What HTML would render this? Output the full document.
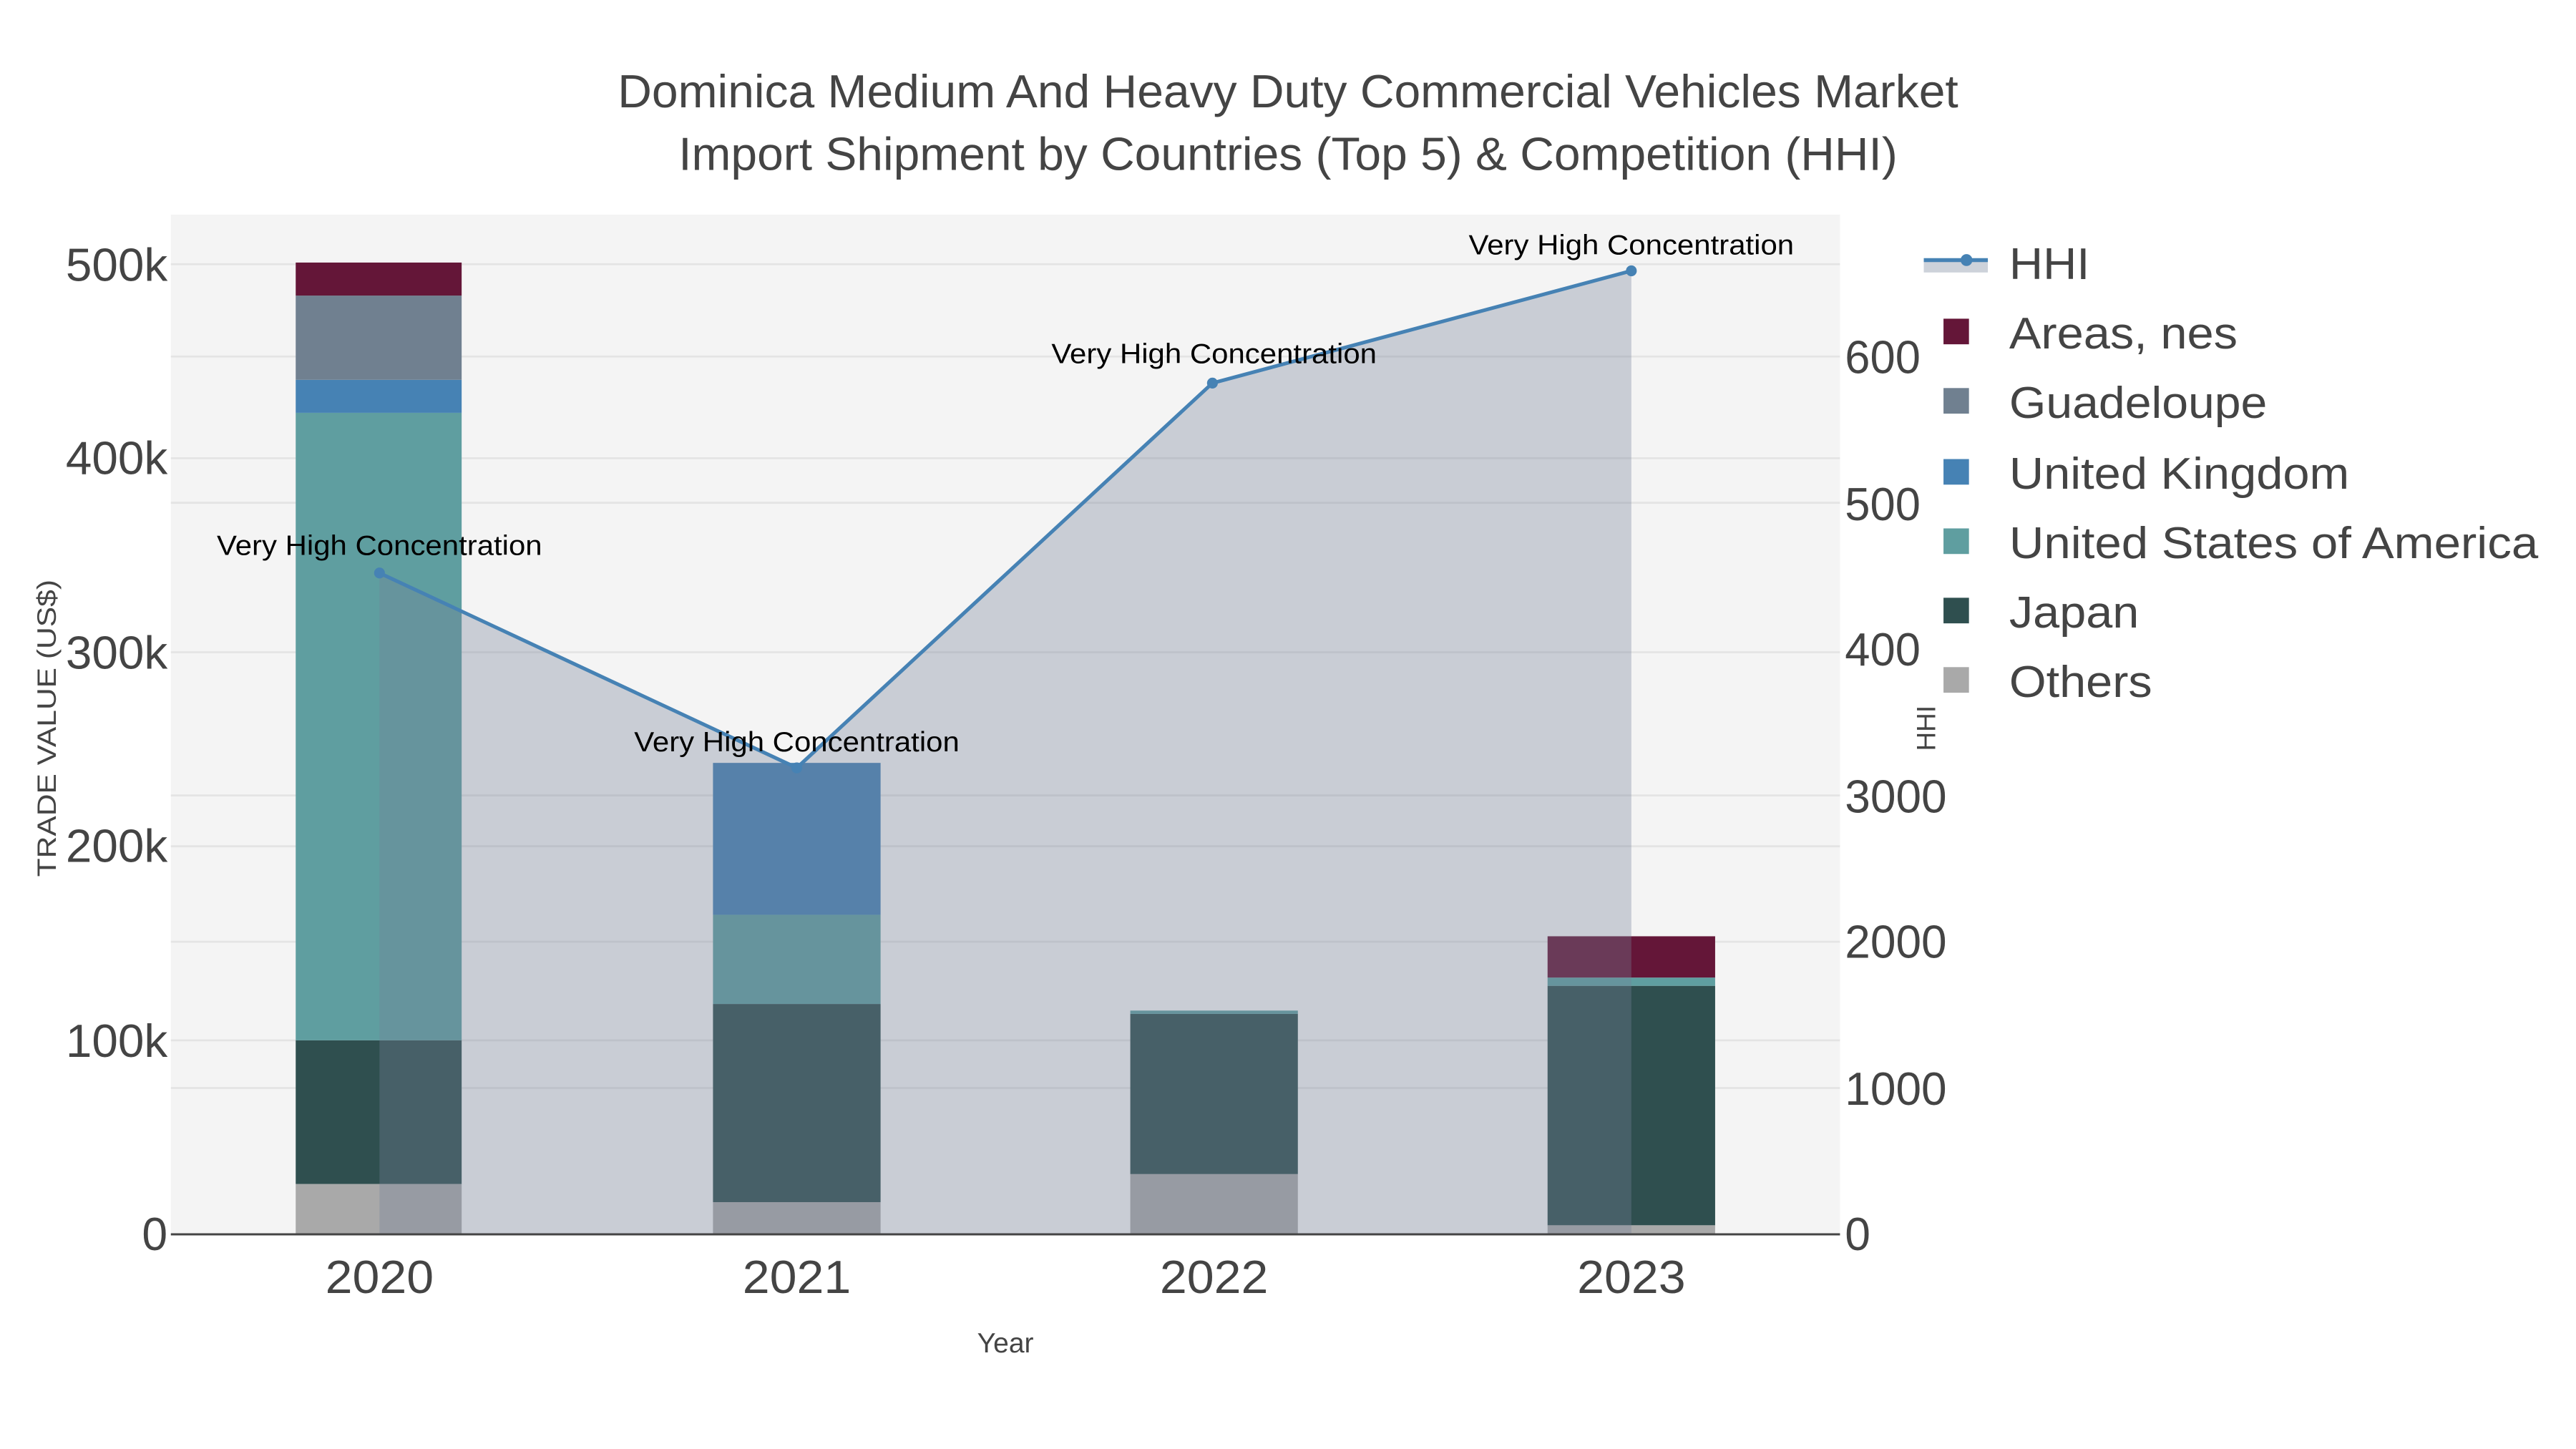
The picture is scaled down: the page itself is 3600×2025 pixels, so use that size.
<!DOCTYPE html>
<html><head><meta charset="utf-8"><style>html,body{margin:0;padding:0;background:#fff}svg{display:block}</style></head>
<body>
<svg width="3600" height="2025" viewBox="0 0 1568 877.5" preserveAspectRatio="none" xmlns="http://www.w3.org/2000/svg" font-family="Liberation Sans, sans-serif">
<rect width="1568" height="877.5" fill="#fff"/>
<rect x="104" y="130" width="1016" height="617.5" fill="#f4f4f4"/>
<g stroke="#e4e4e4" stroke-width="1.2">
<line x1="104" x2="1120" y1="630" y2="630"/><line x1="104" x2="1120" y1="512.5" y2="512.5"/>
<line x1="104" x2="1120" y1="395" y2="395"/><line x1="104" x2="1120" y1="277.5" y2="277.5"/>
<line x1="104" x2="1120" y1="160" y2="160"/>
<line x1="104" x2="1120" y1="658.9" y2="658.9"/><line x1="104" x2="1120" y1="570.3" y2="570.3"/>
<line x1="104" x2="1120" y1="481.7" y2="481.7"/><line x1="104" x2="1120" y1="304.5" y2="304.5"/>
<line x1="104" x2="1120" y1="215.9" y2="215.9"/>
</g>
<rect x="180" y="717" width="101" height="30.5" fill="#a9a9a9"/>
<rect x="180" y="630" width="101" height="87" fill="#2f4f4f"/>
<rect x="180" y="250" width="101" height="380" fill="#5f9ea0"/>
<rect x="180" y="230" width="101" height="20" fill="#4682b4"/>
<rect x="180" y="179" width="101" height="51" fill="#708090"/>
<rect x="180" y="159" width="101" height="20" fill="#641638"/>
<rect x="434" y="728" width="102" height="19.5" fill="#a9a9a9"/>
<rect x="434" y="608" width="102" height="120" fill="#2f4f4f"/>
<rect x="434" y="554" width="102" height="54" fill="#5f9ea0"/>
<rect x="434" y="462" width="102" height="92" fill="#4682b4"/>
<rect x="688" y="711" width="102" height="36.5" fill="#a9a9a9"/>
<rect x="688" y="614" width="102" height="97" fill="#2f4f4f"/>
<rect x="688" y="612" width="102" height="2" fill="#5f9ea0"/>
<rect x="942" y="742" width="102" height="5.5" fill="#a9a9a9"/>
<rect x="942" y="597" width="102" height="145" fill="#2f4f4f"/>
<rect x="942" y="592" width="102" height="5" fill="#5f9ea0"/>
<rect x="942" y="567" width="102" height="25" fill="#641638"/>
<polygon points="231,747.5 231,347 485,465 738,232 993,164 993,747.5" fill="rgb(116,128,151)" fill-opacity="0.34"/>
<line x1="104" x2="1120" y1="747.5" y2="747.5" stroke="#444" stroke-width="1.3"/>
<polyline points="231,347 485,465 738,232 993,164" fill="none" stroke="#4682b4" stroke-width="2.2"/>
<g fill="#4682b4"><circle cx="231" cy="347" r="3.3"/><circle cx="485" cy="465" r="3.3"/><circle cx="738" cy="232" r="3.3"/><circle cx="993" cy="164" r="3.3"/></g>
<g font-size="17" fill="#000" text-anchor="middle">
<text x="231" y="336" textLength="198" lengthAdjust="spacingAndGlyphs">Very High Concentration</text>
<text x="485" y="455" textLength="198" lengthAdjust="spacingAndGlyphs">Very High Concentration</text>
<text x="739" y="220" textLength="198" lengthAdjust="spacingAndGlyphs">Very High Concentration</text>
<text x="993" y="154" textLength="198" lengthAdjust="spacingAndGlyphs">Very High Concentration</text>
</g>
<g fill="#444" font-size="28" text-anchor="middle">
<text x="784" y="65" textLength="816" lengthAdjust="spacingAndGlyphs">Dominica Medium And Heavy Duty Commercial Vehicles Market</text>
<text x="784" y="103" textLength="742" lengthAdjust="spacingAndGlyphs">Import Shipment by Countries (Top 5) &amp; Competition (HHI)</text>
</g>
<g fill="#444" font-size="28" text-anchor="end">
<text x="102" y="757">0</text>
<text x="102" y="640" textLength="62" lengthAdjust="spacingAndGlyphs">100k</text>
<text x="102" y="522" textLength="62" lengthAdjust="spacingAndGlyphs">200k</text>
<text x="102" y="405" textLength="62" lengthAdjust="spacingAndGlyphs">300k</text>
<text x="102" y="287" textLength="62" lengthAdjust="spacingAndGlyphs">400k</text>
<text x="102" y="170" textLength="62" lengthAdjust="spacingAndGlyphs">500k</text>
</g>
<g fill="#444" font-size="28">
<text x="1123" y="757">0</text>
<text x="1123" y="669" textLength="62" lengthAdjust="spacingAndGlyphs">1000</text>
<text x="1123" y="580" textLength="62" lengthAdjust="spacingAndGlyphs">2000</text>
<text x="1123" y="492" textLength="62" lengthAdjust="spacingAndGlyphs">3000</text>
<text x="1123" y="403" textLength="46" lengthAdjust="spacingAndGlyphs">400</text>
<text x="1123" y="315" textLength="46" lengthAdjust="spacingAndGlyphs">500</text>
<text x="1123" y="226" textLength="46" lengthAdjust="spacingAndGlyphs">600</text>
</g>
<g fill="#444" font-size="28" text-anchor="middle">
<text x="231" y="783" textLength="66" lengthAdjust="spacingAndGlyphs">2020</text>
<text x="485" y="783" textLength="66" lengthAdjust="spacingAndGlyphs">2021</text>
<text x="739" y="783" textLength="66" lengthAdjust="spacingAndGlyphs">2022</text>
<text x="993" y="783" textLength="66" lengthAdjust="spacingAndGlyphs">2023</text>
</g>
<text x="612" y="819" font-size="17" fill="#444" text-anchor="middle">Year</text>
<text transform="translate(34,441) rotate(-90)" font-size="16" fill="#444" text-anchor="middle" textLength="180" lengthAdjust="spacingAndGlyphs">TRADE VALUE (US$)</text>
<text transform="translate(1178,441) rotate(-90)" font-size="16" fill="#444" text-anchor="middle">HHI</text>
<rect x="1171" y="157" width="39" height="8" fill="#cdd2da"/>
<line x1="1171" x2="1210" y1="157.5" y2="157.5" stroke="#4682b4" stroke-width="2.4"/>
<circle cx="1197" cy="157.5" r="3.6" fill="#4682b4"/>
<rect x="1183" y="193" width="15.5" height="15.5" fill="#641638"/>
<rect x="1183" y="235" width="15.5" height="15.5" fill="#708090"/>
<rect x="1183" y="278" width="15.5" height="15.5" fill="#4682b4"/>
<rect x="1183" y="320" width="15.5" height="15.5" fill="#5f9ea0"/>
<rect x="1183" y="362" width="15.5" height="15.5" fill="#2f4f4f"/>
<rect x="1183" y="404" width="15.5" height="15.5" fill="#a9a9a9"/>
<g fill="#444" font-size="27">
<text x="1223" y="169" textLength="49" lengthAdjust="spacingAndGlyphs">HHI</text>
<text x="1223" y="211" textLength="139" lengthAdjust="spacingAndGlyphs">Areas, nes</text>
<text x="1223" y="253" textLength="157" lengthAdjust="spacingAndGlyphs">Guadeloupe</text>
<text x="1223" y="296" textLength="207" lengthAdjust="spacingAndGlyphs">United Kingdom</text>
<text x="1223" y="338" textLength="322" lengthAdjust="spacingAndGlyphs">United States of America</text>
<text x="1223" y="380" textLength="79" lengthAdjust="spacingAndGlyphs">Japan</text>
<text x="1223" y="422" textLength="87" lengthAdjust="spacingAndGlyphs">Others</text>
</g>
</svg>
</body></html>
